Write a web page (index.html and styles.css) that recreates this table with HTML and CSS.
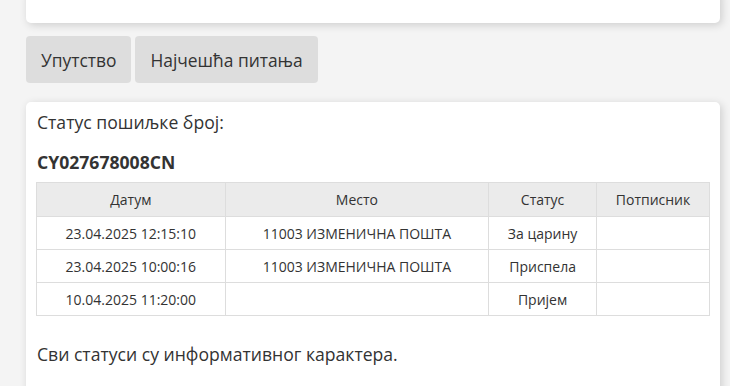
FILE: index.html
```html
<!DOCTYPE html>
<html lang="sr">
<head>
<meta charset="utf-8">
<title>Статус пошиљке</title>
<link rel="stylesheet" href="styles.css">
</head>
<body>
<div class="page">
  <div class="card top-card"></div>
  <div class="buttons">
    <button class="btn">Упутство</button>
    <button class="btn">Најчешћа питања</button>
  </div>
  <div class="card result">
    <p class="label">Статус пошиљке број:</p>
    <h3 class="number">CY027678008CN</h3>
    <table class="status">
      <colgroup>
        <col class="c1"><col class="c2"><col class="c3"><col class="c4">
      </colgroup>
      <thead>
        <tr><th>Датум</th><th>Место</th><th>Статус</th><th>Потписник</th></tr>
      </thead>
      <tbody>
        <tr><td>23.04.2025 12:15:10</td><td>11003 ИЗМЕНИЧНА ПОШТА</td><td>За царину</td><td></td></tr>
        <tr><td>23.04.2025 10:00:16</td><td>11003 ИЗМЕНИЧНА ПОШТА</td><td>Приспела</td><td></td></tr>
        <tr><td>10.04.2025 11:20:00</td><td></td><td>Пријем</td><td></td></tr>
      </tbody>
    </table>
    <p class="note">Сви статуси су информативног карактера.</p>
  </div>
</div>
</body>
</html>
```
FILE: styles.css
```css
html, body {
  margin: 0;
  padding: 0;
  background: #f4f4f4;
  font-family: "Open Sans", "Noto Sans", sans-serif;
  color: #333;
}
.page {
  padding: 0 10px 0 26px;
}
.card {
  background: #fff;
  border-radius: 5px;
  box-shadow: 2px 2px 8px rgba(0, 0, 0, 0.16);
}
.top-card {
  margin-top: -10px;
  height: 33px;
}
.buttons {
  display: flex;
  gap: 4px;
  margin-top: 13px;
}
.btn {
  font-family: inherit;
  font-size: 17.4px;
  color: #333;
  background: #ddd;
  border: 0;
  border-radius: 4px;
  height: 47px;
  padding: 0 15px;
  margin: 0;
}
.result {
  margin-top: 19px;
  padding: 6px 10px 20px 10px;
  height: 300px;
  box-sizing: border-box;
}
.label {
  margin: 0;
  font-size: 17.6px;
  line-height: 28px;
  padding-left: 1px;
}
.number {
  margin: 14px 0 0 1px;
  font-size: 17.6px;
  font-weight: 700;
  line-height: 24px;
}
.status {
  margin-top: 8px;
  width: 674px;
  border-collapse: collapse;
  font-size: 14px;
}
.c1 { width: 189px; }
.c2 { width: 264px; }
.c3 { width: 108px; }
.c4 { width: 113px; }
.status th,
.status td {
  border: 1px solid #ddd;
  text-align: center;
  font-weight: 400;
  height: 33px;
  padding: 0 8px;
  box-sizing: border-box;
}
.status th {
  background: #ebebeb;
  height: 34px;
}
.note {
  margin: 24px 0 0 1px;
  font-size: 17.6px;
  line-height: 28px;
}
```
